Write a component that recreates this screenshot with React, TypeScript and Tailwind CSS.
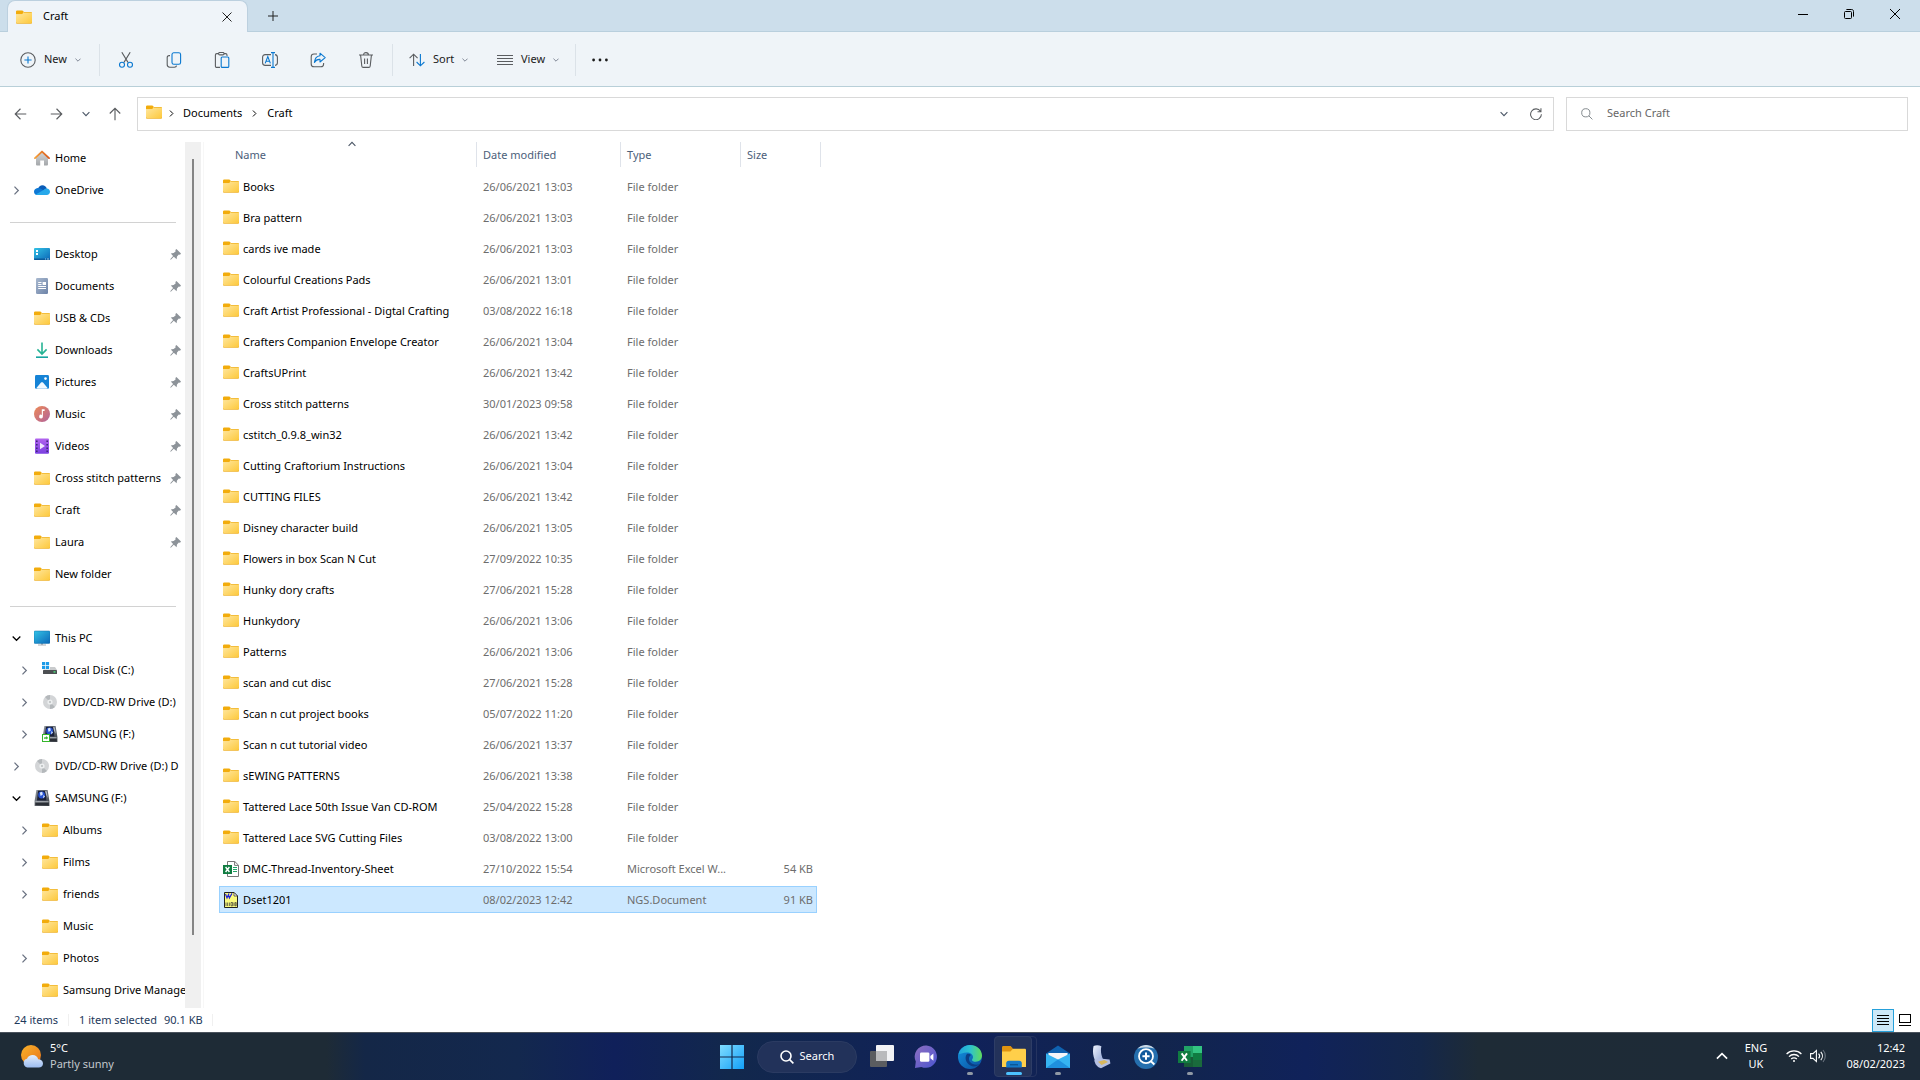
import type { ReactNode } from "react";

type NavItem = {
  label: string;
  icon: ReactNode;
  depth?: number;
  state?: "open" | "closed";
  pinned?: boolean;
};

type FileRow = {
  name: string;
  date: string;
  type: string;
  size?: string;
  icon: ReactNode;
  selected?: boolean;
};

const Gradients = () => (
  <svg className="absolute size-0" aria-hidden="true">
    <defs>
      <linearGradient id="folder" x1="0" y1="0" x2="1" y2="1">
        <stop offset="0" stopColor="#ffe8a2" />
        <stop offset="1" stopColor="#fdc83a" />
      </linearGradient>
      <linearGradient id="screen" x1="0" y1="0" x2="1" y2="1">
        <stop offset="0" stopColor="#33c3e6" />
        <stop offset="1" stopColor="#0b67b8" />
      </linearGradient>
      <linearGradient id="roof" x1="0" y1="0" x2="1" y2="0">
        <stop offset="0" stopColor="#f6a13a" />
        <stop offset="1" stopColor="#d8591c" />
      </linearGradient>
      <linearGradient id="wall" x1="0" y1="0" x2="0" y2="1">
        <stop offset="0" stopColor="#d4d6d8" />
        <stop offset="1" stopColor="#a4a7aa" />
      </linearGradient>
      <linearGradient id="doc" x1="0" y1="0" x2="1" y2="1">
        <stop offset="0" stopColor="#a9b9cf" />
        <stop offset="1" stopColor="#6d83a8" />
      </linearGradient>
      <linearGradient id="music" x1="0" y1="0" x2="1" y2="1">
        <stop offset="0" stopColor="#ee8a55" />
        <stop offset="1" stopColor="#b0629c" />
      </linearGradient>
      <linearGradient id="video" x1="0" y1="0" x2="0" y2="1">
        <stop offset="0" stopColor="#b264ee" />
        <stop offset="1" stopColor="#7a3fe0" />
      </linearGradient>
      <linearGradient id="drive" x1="0" y1="0" x2="1" y2="1">
        <stop offset="0" stopColor="#8d949c" />
        <stop offset="1" stopColor="#3a3f46" />
      </linearGradient>
      <linearGradient id="win" x1="0" y1="0" x2="1" y2="1">
        <stop offset="0" stopColor="#7fdcff" />
        <stop offset="1" stopColor="#12a0f8" />
      </linearGradient>
      <linearGradient id="chat" x1="0" y1="0" x2="1" y2="1">
        <stop offset="0" stopColor="#8f6fc0" />
        <stop offset="1" stopColor="#4a55d0" />
      </linearGradient>
      <linearGradient id="edgeTop" x1="0" y1="0" x2="1" y2="0">
        <stop offset="0" stopColor="#1fa2dd" />
        <stop offset="0.5" stopColor="#2dc2cf" />
        <stop offset="1" stopColor="#62dc5a" />
      </linearGradient>
      <linearGradient id="edgeLow" x1="0" y1="0" x2="1" y2="1">
        <stop offset="0" stopColor="#1393e0" />
        <stop offset="1" stopColor="#0a4f9e" />
      </linearGradient>
      <linearGradient id="lid" x1="0" y1="0" x2="1" y2="1">
        <stop offset="0" stopColor="#eef3fd" />
        <stop offset="1" stopColor="#8fa3d4" />
      </linearGradient>
      <linearGradient id="sun" x1="0" y1="0" x2="1" y2="1">
        <stop offset="0" stopColor="#f9b32a" />
        <stop offset="1" stopColor="#e8731a" />
      </linearGradient>
      <linearGradient id="cloud" x1="0" y1="0" x2="0" y2="1">
        <stop offset="0" stopColor="#e4eefc" />
        <stop offset="1" stopColor="#9dbdf0" />
      </linearGradient>
    </defs>
  </svg>
);

const FolderIcon = ({ className = "" }: { className?: string }) => (
  <svg className={`w-4 h-4 shrink-0 ${className}`} viewBox="0 0 16 16">
    <path d="M0 2.6C0 2 .5 1.4 1.1 1.4H6.4L8 3L6.5 5.4H0Z" fill="#f2ac0c" />
    <path d="M0 5.2H6L8 3H15C15.6 3 16 3.4 16 4V13.4C16 14 15.6 14.4 15 14.4H1C.4 14.4 0 14 0 13.4Z" fill="url(#folder)" />
    <path d="M8 3H15C15.5 3 15.9 3.3 16 3.7H7.4Z" fill="#f0b429" />
    <path d="M0 13.3C.2 13.8 .5 13.9 1 13.9H15C15.5 13.9 15.8 13.7 16 13.3C16 14.2 15.6 14.6 15 14.6H1C.4 14.6 0 14.2 0 13.3Z" fill="#e8a317" />
  </svg>
);

const HomeIcon = () => (
  <svg className="w-4 h-4 shrink-0" viewBox="0 0 16 16">
    <path d="M2 7.4L8 2L14 7.4V14.6C14 15.2 13.6 15.5 13 15.5H10V10.4H6.2V15.5H3C2.4 15.5 2 15.2 2 14.6Z" fill="url(#wall)" />
    <path d="M1 8.1L8 1.6L15 8.1" fill="none" stroke="url(#roof)" strokeWidth="1.9" strokeLinecap="round" strokeLinejoin="round" />
  </svg>
);

const OneDriveIcon = () => (
  <svg className="w-4 h-4 shrink-0" viewBox="0 0 16 16">
    <path d="M4 7C4.6 4.6 6.4 3.3 8.4 3.3C10.6 3.3 12.2 4.7 12.8 6.6L9 9.5Z" fill="#0a5cb8" />
    <path d="M3.6 6C5 5.8 6.3 6.2 7.4 7L11 9.3L3 13C1.3 12.8 0 11.4 0 9.7C0 7.7 1.5 6.2 3.6 6Z" fill="#0f78d4" />
    <path d="M12.8 6.5C14.6 6.6 16 8 16 9.8C16 11.7 14.6 13 12.8 13H3.4C2.7 13 2.1 12.8 1.6 12.4L9.6 7.9C10.5 7 11.6 6.4 12.8 6.5Z" fill="#27a8ea" />
  </svg>
);

const DesktopIcon = () => (
  <svg className="w-4 h-4 shrink-0" viewBox="0 0 16 16">
    <rect y="2" width="16" height="12" rx="1" fill="url(#screen)" />
    <path d="M2 4H4V6H2ZM2 7H4V9H2Z" fill="#fff" />
    <path d="M0 12.6H16V13C16 13.6 15.6 14 15 14H1C.4 14 0 13.6 0 13Z" fill="#0a5a9c" />
    <path d="M11 13H12M13 13H15" stroke="#bfe6fa" strokeWidth=".8" />
  </svg>
);

const DocumentsIcon = () => (
  <svg className="w-4 h-4 shrink-0" viewBox="0 0 16 16">
    <rect x="2" width="12" height="16" rx="1.2" fill="url(#doc)" />
    <path d="M4.2 4.5H7.5M4.2 6.5H7.5M4.2 8.5H12M4.2 10.5H12" stroke="#fff" strokeWidth="1" />
    <rect x="8.6" y="4" width="3.4" height="3" fill="#fff" />
  </svg>
);

const DownloadsIcon = () => (
  <svg className="w-4 h-4 shrink-0" viewBox="0 0 16 16" fill="none" stroke="#26b394" strokeWidth="1.6">
    <path d="M8 .5V11.6M3.4 7.4L8 12L12.6 7.4" />
    <path d="M2 15.2H14" stroke="#16a5a0" />
  </svg>
);

const PicturesIcon = () => (
  <svg className="w-4 h-4 shrink-0" viewBox="0 0 16 16">
    <rect x="1" y="1" width="14" height="14" rx="1.4" fill="#1583d6" />
    <path d="M2 14.6L7 8.6C7.6 8 8.4 8 9 8.6L14 14.6C13.8 14.9 2.3 14.9 2 14.6Z" fill="#f2f9ff" />
    <circle cx="11.5" cy="4.6" r="1.3" fill="#fff" />
  </svg>
);

const MusicIcon = () => (
  <svg className="w-4 h-4 shrink-0" viewBox="0 0 16 16">
    <circle cx="8" cy="8" r="8" fill="url(#music)" />
    <path d="M7.8 3.2H10.6V5H8.9V10.6A1.9 1.9 0 1 1 7.8 8.9Z" fill="#fff" />
  </svg>
);

const VideosIcon = () => (
  <svg className="w-4 h-4 shrink-0" viewBox="0 0 16 16">
    <rect x="1" y=".4" width="14" height="15.4" rx="1" fill="url(#video)" />
    <path d="M2 2.5H3.6V4H2ZM2 6H3.6V7.5H2ZM2 9.5H3.6V11H2ZM2 12.6H3.6V14H2ZM12.4 2.5H14V4H12.4ZM12.4 6H14V7.5H12.4ZM12.4 9.5H14V11H12.4ZM12.4 12.6H14V14H12.4Z" fill="#3d2a78" />
    <path d="M6 4.8L11 8L6 11.2Z" fill="#efe6fc" />
  </svg>
);

const PcIcon = () => (
  <svg className="w-4 h-4 shrink-0" viewBox="0 0 16 16">
    <path d="M7 13H9V14.6H12V15.6H4V14.6H7Z" fill="#a9b0b6" />
    <rect y="1" width="16" height="12.4" rx="1" fill="url(#screen)" stroke="#0f6ca8" strokeWidth=".5" />
  </svg>
);

const DiskIcon = () => (
  <svg className="w-4 h-4 shrink-0" viewBox="0 0 16 16">
    <path d="M0 0H3.2V3.2H0ZM3.9 0H7.1V3.2H3.9ZM0 3.9H3.2V7.1H0ZM3.9 3.9H7.1V7.1H3.9Z" fill="#1d9be8" />
    <path d="M8 5H13L15 8H1L2 7.6H8Z" fill="#c9cbcd" />
    <rect x="1" y="8" width="14" height="4" rx=".6" fill="#4c4f52" />
    <rect x="11.5" y="9.2" width="2" height="1.4" fill="#4be07a" />
  </svg>
);

const DiscIcon = () => (
  <svg className="w-4 h-4 shrink-0" viewBox="0 0 16 16">
    <circle cx="8" cy="8" r="7" fill="#d3d5d7" />
    <path d="M8 8L3 3A7 7 0 0 1 8 1ZM8 8L13 13A7 7 0 0 1 8 15Z" fill="#b4b8bb" />
    <circle cx="8" cy="8" r="2.6" fill="#eceeef" />
    <circle cx="8" cy="8" r="1" fill="#b9bcbe" />
  </svg>
);

const SamsungIcon = ({ linked = false }: { linked?: boolean }) => (
  <svg className="w-4 h-4 shrink-0" viewBox="0 0 16 16">
    <path d="M2.4 0H13.6L15.4 11V16H.6V11Z" fill="url(#drive)" />
    <path d="M4 .8H11.4L12.4 10.4H3Z" fill="#1a2038" />
    <circle cx="7.6" cy="5" r="3.4" fill="#2450d0" />
    <path d="M5.8 2.6L8.2 1.8L8.8 4.6L6.6 6ZM9.4 5L11 6.4L9.2 8.6Z" fill="#d8e7ff" />
    <path d="M11 1L12.8 1.4L13.8 8L12.2 5Z" fill="#b6bdc6" />
    <rect x="1.4" y="12.4" width="13.2" height="2.8" fill="#2b2f36" />
    <path d="M1.4 11.8H14.6" stroke="#c3c8ce" strokeWidth=".9" />
    {linked && (
      <>
        <rect x=".5" y="8.5" width="7" height="7" fill="#fff" stroke="#35b52c" />
        <path d="M2.2 13V11.2H4.2V10L6.2 12L4.2 13.6V12.6Z" fill="#35b52c" />
      </>
    )}
  </svg>
);

const ExcelFileIcon = () => (
  <svg className="w-4 h-4 shrink-0" viewBox="0 0 16 16">
    <path d="M4.5 .5H11.8L15.5 4.2V15.5H4.5Z" fill="#fff" stroke="#777" />
    <path d="M11.6 .6V4.4H15.4" fill="none" stroke="#777" />
    <path d="M10 6.5H14M10 8.5H14M10 10.5H14" stroke="#21a366" />
    <rect y="4" width="9" height="9" fill="#107c41" />
    <path d="M2.6 6L6.4 11M6.4 6L2.6 11" stroke="#fff" strokeWidth="1.4" />
  </svg>
);

const NgsFileIcon = () => (
  <svg className="w-4 h-4 shrink-0" viewBox="0 0 16 16">
    <path d="M1.5 .5H11L14.5 4V15.5H1.5Z" fill="#fbfb7e" stroke="#222" />
    <path d="M11 .5V4H14.5Z" fill="#fff" stroke="#222" strokeWidth=".7" />
    <path d="M2.5 2L4 6L6 1.6M5.4 2.6L6.4 6L9 1.4" fill="none" stroke="#2020d8" strokeWidth="1.2" />
    <path d="M3 10.5V14M4.6 10.5V14M6.4 10.5V14M8 10.5H9.6V13.8H8ZM11 10.5V14M12.2 10.5H13.2V13.8H12.2Z" fill="none" stroke="#333" strokeWidth=".7" />
  </svg>
);

const PinIcon = () => (
  <svg className="w-[11px] h-[11px] shrink-0" viewBox="0 0 11 11">
    <path d="M6.4 0L11 4.4L10 5.8L8.8 5.6L7 7.6L6.6 10.2L3.8 7.8L.8 10.8L.2 10.2L3.1 7L.8 4.6L3.6 4L5.6 2.4L5.4 1Z" fill="#8d9399" />
  </svg>
);

const Chevron = ({ d = "down", className = "size-2 text-gray-500" }: { d?: "down" | "up" | "right"; className?: string }) => (
  <svg className={`${className} shrink-0`} viewBox="0 0 8 8" fill="none" stroke="currentColor" strokeWidth="1.1">
    <path d={{ down: "M.6 2.2L4 5.6L7.4 2.2", up: "M.6 5.8L4 2.4L7.4 5.8", right: "M2.2 .6L5.6 4L2.2 7.4" }[d]} />
  </svg>
);

const Stroke = ({ children, className = "size-4" }: { children: ReactNode; className?: string }) => (
  <svg className={`${className} shrink-0`} viewBox="0 0 16 16" fill="none" stroke="#5a5d60" strokeWidth="1.1">
    {children}
  </svg>
);

const BLUE = "#0a78d0";

const TOOLS = [
  {
    label: "Cut",
    icon: (
      <>
        <path d="M3.8 .2L10 10.4M12.2 .2L6 10.4" />
        <circle cx="4" cy="12.8" r="2.5" stroke={BLUE} />
        <circle cx="12" cy="12.8" r="2.5" stroke={BLUE} />
      </>
    ),
  },
  {
    label: "Copy",
    icon: (
      <>
        <path d="M4 3.6H3.2C2 3.6 1.2 4.4 1.2 5.6V12.6C1.2 14.2 2.2 15.2 3.8 15.2H8.4C9.6 15.2 10.4 14.6 10.6 13.6" />
        <rect x="6" y=".8" width="8.6" height="11.4" rx="1.8" stroke={BLUE} />
      </>
    ),
  },
  {
    label: "Paste",
    icon: (
      <>
        <path d="M6 15.4H2.8C1.9 15.4 1.4 14.9 1.4 14V3C1.4 2.1 1.9 1.6 2.8 1.6H4.6M10 1.6H11.6C12.5 1.6 13 2.1 13 3V4" />
        <rect x="4.6" y=".5" width="5.4" height="2.4" rx="1.1" />
        <rect x="7.2" y="5" width="7.6" height="10.4" rx="1" stroke={BLUE} />
      </>
    ),
  },
  {
    label: "Rename",
    icon: (
      <>
        <path d="M9 2.6H3.2C1.6 2.6 .6 3.6 .6 5.2V10.8C.6 12.4 1.6 13.4 3.2 13.4H9M13 2.6C14.6 2.8 15.4 3.8 15.4 5.2V10.8C15.4 12.2 14.6 13.2 13 13.4" />
        <path d="M3.2 11.4L5.8 4.6L8.4 11.4M4 9.2H7.6M9 .6H13M11 .6V15.4M9 15.4H13" stroke={BLUE} />
      </>
    ),
  },
  {
    label: "Share",
    icon: (
      <>
        <path d="M7 2H4C2.2 2 1.2 3 1.2 4.8V12C1.2 13.8 2.2 14.8 4 14.8H10.8C12.6 14.8 13.6 13.8 13.6 12V11" />
        <path d="M10 1.2L15.2 5.6L10 10V7.4C7.6 7.2 5.8 8 4.4 10.4C4.8 6.6 6.6 4.2 10 3.8Z" stroke={BLUE} strokeLinejoin="round" />
      </>
    ),
  },
  {
    label: "Delete",
    icon: <path d="M1 3H15M5.6 2.8C5.6 1.4 6.6 .6 8 .6C9.4 .6 10.4 1.4 10.4 2.8M2.6 3.2L3.8 14C3.9 14.9 4.4 15.4 5.2 15.4H10.8C11.6 15.4 12.1 14.9 12.2 14L13.4 3.2M6.6 6.4V12M9.4 6.4V12" />,
  },
];

const f = <FolderIcon />;

const HOME: NavItem[] = [
  { label: "Home", icon: <HomeIcon /> },
  { label: "OneDrive", icon: <OneDriveIcon />, state: "closed" },
];

const PINNED: NavItem[] = [
  { label: "Desktop", icon: <DesktopIcon />, pinned: true },
  { label: "Documents", icon: <DocumentsIcon />, pinned: true },
  { label: "USB & CDs", icon: f, pinned: true },
  { label: "Downloads", icon: <DownloadsIcon />, pinned: true },
  { label: "Pictures", icon: <PicturesIcon />, pinned: true },
  { label: "Music", icon: <MusicIcon />, pinned: true },
  { label: "Videos", icon: <VideosIcon />, pinned: true },
  { label: "Cross stitch patterns", icon: f, pinned: true },
  { label: "Craft", icon: f, pinned: true },
  { label: "Laura", icon: f, pinned: true },
  { label: "New folder", icon: f },
];

const DRIVES: NavItem[] = [
  { label: "This PC", icon: <PcIcon />, state: "open" },
  { label: "Local Disk (C:)", icon: <DiskIcon />, state: "closed", depth: 1 },
  { label: "DVD/CD-RW Drive (D:)", icon: <DiscIcon />, state: "closed", depth: 1 },
  { label: "SAMSUNG (F:)", icon: <SamsungIcon linked />, state: "closed", depth: 1 },
  { label: "DVD/CD-RW Drive (D:) D", icon: <DiscIcon />, state: "closed" },
  { label: "SAMSUNG (F:)", icon: <SamsungIcon />, state: "open" },
  { label: "Albums", icon: f, state: "closed", depth: 1 },
  { label: "Films", icon: f, state: "closed", depth: 1 },
  { label: "friends", icon: f, state: "closed", depth: 1 },
  { label: "Music", icon: f, depth: 1 },
  { label: "Photos", icon: f, state: "closed", depth: 1 },
  { label: "Samsung Drive Manage", icon: f, depth: 1 },
];

const folder = (name: string, date: string): FileRow => ({
  name,
  date,
  type: "File folder",
  icon: <FolderIcon className="mb-[3px]" />,
});

const FILES: FileRow[] = [
  folder("Books", "26/06/2021 13:03"),
  folder("Bra pattern", "26/06/2021 13:03"),
  folder("cards ive made", "26/06/2021 13:03"),
  folder("Colourful Creations Pads", "26/06/2021 13:01"),
  folder("Craft Artist Professional - Digtal Crafting", "03/08/2022 16:18"),
  folder("Crafters Companion Envelope Creator", "26/06/2021 13:04"),
  folder("CraftsUPrint", "26/06/2021 13:42"),
  folder("Cross stitch patterns", "30/01/2023 09:58"),
  folder("cstitch_0.9.8_win32", "26/06/2021 13:42"),
  folder("Cutting Craftorium Instructions", "26/06/2021 13:04"),
  folder("CUTTING FILES", "26/06/2021 13:42"),
  folder("Disney character build", "26/06/2021 13:05"),
  folder("Flowers in box Scan N Cut", "27/09/2022 10:35"),
  folder("Hunky dory crafts", "27/06/2021 15:28"),
  folder("Hunkydory", "26/06/2021 13:06"),
  folder("Patterns", "26/06/2021 13:06"),
  folder("scan and cut disc", "27/06/2021 15:28"),
  folder("Scan n cut project books", "05/07/2022 11:20"),
  folder("Scan n cut tutorial video", "26/06/2021 13:37"),
  folder("sEWING PATTERNS", "26/06/2021 13:38"),
  folder("Tattered Lace 50th Issue Van CD-ROM", "25/04/2022 15:28"),
  folder("Tattered Lace SVG Cutting Files", "03/08/2022 13:00"),
  { name: "DMC-Thread-Inventory-Sheet", date: "27/10/2022 15:54", type: "Microsoft Excel W...", size: "54 KB", icon: <ExcelFileIcon /> },
  { name: "Dset1201", date: "08/02/2023 12:42", type: "NGS.Document", size: "91 KB", icon: <NgsFileIcon />, selected: true },
];

const TitleBar = () => (
  <header className="flex justify-between h-8 bg-[#ccdeeb] border-b border-[#b9cfdd] pl-[7px] pr-0.5">
    <div className="flex items-start">
      <div className="flex items-center w-[241px] h-8 bg-[#eff4f9] rounded-t-lg border border-b-0 border-[#bcd0df] pl-2">
        <FolderIcon />
        <span className="ml-[11px] flex-1 text-black">Craft</span>
        <button aria-label="Close tab" className="w-10 h-7 flex items-center justify-center">
          <svg className="size-2.5" viewBox="0 0 10 10" stroke="#222" fill="none"><path d="M.5 .5L9.5 9.5M9.5 .5L.5 9.5" /></svg>
        </button>
      </div>
      <button aria-label="New tab" className="w-[50px] h-8 flex items-center justify-center">
        <svg className="size-2.5" viewBox="0 0 10 10" stroke="#222" fill="none"><path d="M5 0V10M0 5H10" /></svg>
      </button>
    </div>
    <div className="flex h-7">
      <button aria-label="Minimize" className="w-[46px] flex items-center justify-center">
        <svg className="size-2.5" viewBox="0 0 10 10" stroke="#000"><path d="M0 5.5H10" /></svg>
      </button>
      <button aria-label="Restore" className="w-[46px] flex items-center justify-center">
        <svg className="size-2.5" viewBox="0 0 10 10" stroke="#000" fill="none">
          <rect x=".5" y="2.5" width="7" height="7" rx="1" />
          <path d="M2.4 .5H7.6C8.8 .5 9.5 1.2 9.5 2.4V7.6" />
        </svg>
      </button>
      <button aria-label="Close" className="w-[46px] flex items-center justify-center">
        <svg className="size-2.5" viewBox="0 0 10 10" stroke="#000" fill="none"><path d="M0 0L10 10M10 0L0 10" /></svg>
      </button>
    </div>
  </header>
);

const Separator = () => <div className="w-px h-8 bg-[#dbe2e8]" />;

const Toolbar = () => (
  <div role="toolbar" className="flex items-center h-[55px] bg-[#eff4f8] border-b border-[#b8cfd8] pt-px text-[#1b1b1b]">
    <button className="flex items-center w-[99px] h-9 pl-5 gap-2">
      <Stroke>
        <circle cx="8" cy="8" r="7.2" />
        <path d="M8 4.4V11.6M4.4 8H11.6" stroke={BLUE} />
      </Stroke>
      New
      <Chevron className="size-1.5 text-gray-500" />
    </button>
    <Separator />
    <div className="flex mx-0.5">
      {TOOLS.map((t) => (
        <button key={t.label} aria-label={t.label} className="flex items-center justify-center w-12 h-9">
          <Stroke>{t.icon}</Stroke>
        </button>
      ))}
    </div>
    <Separator />
    <button className="flex items-center w-[88px] h-9 pl-4 gap-2">
      <Stroke>
        <path d="M4.6 14V2.2M.6 6.2L4.6 2.2L8.6 6.2" />
        <path d="M11.4 2V13.8M7.6 10L11.4 13.8L15.4 10" stroke={BLUE} />
      </Stroke>
      Sort
      <Chevron className="size-1.5 text-gray-500" />
    </button>
    <button className="flex items-center w-[94px] h-9 pl-4 gap-2">
      <Stroke><path d="M0 3.5H16M0 6.5H16M0 9.5H16M0 12.5H16" /></Stroke>
      View
      <Chevron className="size-1.5 text-gray-500" />
    </button>
    <Separator />
    <button aria-label="See more" className="flex items-center justify-center w-12 h-9">
      <svg className="size-4" viewBox="0 0 16 16" fill="#1b1b1b"><circle cx="1.6" cy="8" r="1.4" /><circle cx="8" cy="8" r="1.4" /><circle cx="14.4" cy="8" r="1.4" /></svg>
    </button>
  </div>
);

const AddressBar = () => (
  <div className="flex items-center h-[55px] pl-1 pr-3 pb-0.5">
    <button aria-label="Back" className="w-[34px] flex justify-center">
      <Stroke className="size-3.5"><path d="M14 8H1.6M7.4 2L1.4 8L7.4 14" strokeWidth="1.3" /></Stroke>
    </button>
    <button aria-label="Forward" className="w-9 flex justify-center">
      <Stroke className="size-3.5"><path d="M2 8H14.4M8.6 2L14.6 8L8.6 14" strokeWidth="1.3" /></Stroke>
    </button>
    <button aria-label="Recent locations" className="w-6 flex justify-center"><Chevron className="size-2 text-gray-600" /></button>
    <button aria-label="Up" className="w-[34px] flex justify-center">
      <Stroke className="size-3.5"><path d="M8 15V1.6M2 7.4L8 1.4L14 7.4" strokeWidth="1.3" /></Stroke>
    </button>
    <nav aria-label="Address" className="flex flex-1 items-center h-[34px] ml-[5px] border border-[#d9d9d9] pl-2 text-black">
      <FolderIcon className="mb-[3px]" />
      <span className="w-[21px] pl-1.5"><Chevron d="right" className="size-[7px] text-black" /></span>
      <a href="#documents">Documents</a>
      <span className="w-[25px] flex justify-center"><Chevron d="right" className="size-[7px] text-black" /></span>
      <a href="#craft">Craft</a>
      <button aria-label="Previous locations" className="ml-auto w-[30px] flex justify-center"><Chevron className="size-2 text-gray-600" /></button>
      <button aria-label="Refresh" className="w-[34px] flex justify-center">
        <Stroke className="size-3"><path d="M14 4.4A7.2 7.2 0 1 0 15.2 8.4M14.6 .4V5H10" strokeWidth="1.4" /></Stroke>
      </button>
    </nav>
    <label className="flex items-center w-[342px] h-[34px] ml-3 pl-3.5 gap-3.5 border border-[#d9d9d9]">
      <svg className="size-3 shrink-0" viewBox="0 0 12 12" fill="none" stroke="#858b8f"><circle cx="4.8" cy="4.8" r="4.1" /><path d="M7.8 7.8L11.4 11.4" /></svg>
      <input type="search" aria-label="Search Craft" placeholder="Search Craft" className="flex-1 outline-none placeholder:text-[#666]" />
    </label>
  </div>
);

const NavList = ({ items }: { items: NavItem[] }) => (
  <ul>
    {items.map((item, i) => (
      <li key={i}>
        <a href="#item" className={`flex items-center h-8 text-black whitespace-nowrap ${item.depth ? "pl-5" : "pl-3"}`}>
          <span className="w-[22px] shrink-0">
            {item.state === "open" && <Chevron className="size-[9px] text-black" />}
            {item.state === "closed" && <Chevron d="right" className="size-[9px] text-gray-500" />}
          </span>
          {item.icon}
          <span className="ml-[5px] flex-1">{item.label}</span>
          {item.pinned && <span className="mr-1"><PinIcon /></span>}
        </a>
      </li>
    ))}
  </ul>
);

const NavDivider = () => (
  <div className="h-8 flex items-center pl-2.5 pr-[9px]">
    <div className="h-px w-full bg-[#d2d2d2]" />
  </div>
);

const Sidebar = () => (
  <aside className="flex w-[204px] shrink-0 border-r border-[#f7f7f7]">
    <div className="w-[185px] overflow-hidden">
      <NavList items={HOME} />
      <NavDivider />
      <NavList items={PINNED} />
      <NavDivider />
      <NavList items={DRIVES} />
    </div>
    <div className="flex justify-center w-4 bg-[#f0f0f0] pt-[17px] pb-[73px]">
      <div className="w-0.5 bg-[#858585]" />
    </div>
  </aside>
);

const HEADINGS = [
  { label: "Name", width: "w-[258px]", pad: "pl-4" },
  { label: "Date modified", width: "w-36", pad: "pl-1.5" },
  { label: "Type", width: "w-[120px]", pad: "pl-1.5" },
  { label: "Size", width: "w-20", pad: "pl-1.5" },
];

const FileTable = () => (
  <main className="flex-1 pl-[15px]">
    <table className="table-fixed w-[602px] text-left">
      <thead>
        <tr>
          {HEADINGS.map((h) => (
            <th key={h.label} className={`${h.width} h-[29px] p-0 align-top font-normal text-[#4c607a]`}>
              <div className={`relative flex items-center h-[25px] pt-px border-r border-[#dfe3ea] ${h.pad}`}>
                {h.label}
                {h.label === "Name" && <Chevron d="up" className="absolute left-[129px] -top-0.5 size-2 text-gray-600" />}
              </div>
            </th>
          ))}
        </tr>
      </thead>
      <tbody>
        {FILES.map((file) => {
          const cell = `flex items-center h-[27px] pt-px border-y ${file.selected ? "bg-[#cce8ff] border-[#99d1ff]" : "border-transparent"}`;
          return (
            <tr key={file.name} className="h-[31px] text-[#6d6d6d] whitespace-nowrap">
              <td className="p-0">
                <div className={`${cell} border-l pl-[3px] text-black`}>
                  {file.icon}
                  <span className="ml-1">{file.name}</span>
                </div>
              </td>
              <td className="p-0"><div className={`${cell} pl-1.5`}>{file.date}</div></td>
              <td className="p-0"><div className={`${cell} pl-1.5`}>{file.type}</div></td>
              <td className="p-0"><div className={`${cell} border-r justify-end pr-[3px] mr-1`}>{file.size}</div></td>
            </tr>
          );
        })}
      </tbody>
    </table>
  </main>
);

const StatusBar = () => (
  <footer className="flex items-center h-6 pl-3.5 pr-1 text-[#1e395b]">
    <span className="w-[54px]">24 items</span>
    <div className="w-px h-3 bg-[#f0f0f0]" />
    <span className="w-[95px] pl-2.5">1 item selected</span>
    <span className="w-[48px]">90.1 KB</span>
    <div className="w-px h-3 bg-[#f0f0f0]" />
    <div className="flex items-center ml-auto">
      <button aria-label="Details view" className="flex items-center justify-center w-[22px] h-[23px] bg-[#cce8f8] border border-[#26a0da]">
        <svg className="w-3 h-[11px]" viewBox="0 0 12 11" stroke="#000"><path d="M0 .5H12M0 3.5H12M0 6.5H12M0 9.5H12" /></svg>
      </button>
      <button aria-label="Large icons view" className="flex items-center justify-center w-[22px] h-[23px]">
        <svg className="w-3 h-3" viewBox="0 0 12 12" stroke="#000" fill="none"><rect x=".5" y=".5" width="11" height="8" /><path d="M0 11.5H12" /></svg>
      </button>
    </div>
  </footer>
);

const TASKS = [
  {
    label: "Task view",
    icon: (
      <>
        <rect x="6" y="0" width="18" height="16" rx="1" fill="#f2f3f5" />
        <rect x="0" y="6" width="17" height="16" rx="1" fill="#5b5d60" />
        <path d="M6 6H17V16H6Z" fill="#b9babc" />
      </>
    ),
  },
  {
    label: "Chat",
    icon: (
      <>
        <path d="M12.5 .5A11.2 11.2 0 1 1 7.4 22L1 23L1.8 16.6A11.2 11.2 0 0 1 12.5 .5Z" fill="url(#chat)" />
        <rect x="6" y="7.4" width="9.4" height="9.4" rx="1.4" fill="#fff" />
        <path d="M16.4 11L19.4 8.4V15.8L16.4 13.2Z" fill="#fff" />
      </>
    ),
  },
  {
    label: "Edge",
    running: true,
    icon: (
      <>
        <circle cx="12" cy="12" r="12" fill="url(#edgeLow)" />
        <path d="M.4 9.6C1.6 4 6.4 0 12 0C18.6 0 24 4.6 24 10.6C24 14.4 21.2 16.8 17.8 16.8C15.6 16.8 14 16 14 15C14 14.2 15 13.6 15 12C15 9.4 12.4 7.4 8.8 7.4C5 7.4 1.6 9 .4 9.6Z" fill="url(#edgeTop)" />
        <path d="M9 9C6.6 11.4 7 17.6 12.4 20.6C15.6 22.2 19.4 21.4 21.6 19C18.6 20.2 14.6 19.8 12.6 17.6C10.4 15.2 10.4 11.8 13 10C12 9 10.4 8.6 9 9Z" fill="#0b3f86" />
      </>
    ),
  },
  {
    label: "File Explorer",
    active: true,
    icon: (
      <>
        <path d="M0 2.4C0 1.6 .5 1 1.4 1H8.6L11 3.6V7H0Z" fill="#e09410" />
        <path d="M0 6.4H8.4L11 3.8H22.6C23.5 3.8 24 4.3 24 5.2V22H0Z" fill="#ffcf4a" />
        <path d="M4.2 22.6V18.4C4.2 16.8 5.2 15.8 6.8 15.8H17.2C18.8 15.8 19.8 16.8 19.8 18.4V22.6Z" fill="#1579c8" />
        <path d="M8 19H16V20.4H8Z" fill="#0a5797" />
      </>
    ),
  },
  {
    label: "Mail",
    running: true,
    icon: (
      <>
        <path d="M0 8.4L12 .6L24 8.4V14H0Z" fill="#0f62b0" />
        <path d="M2.4 8H21.6V12L12 18L2.4 12Z" fill="#f4f6f8" />
        <path d="M0 8.4L12 14.6L24 8.4V23H0Z" fill="#36b4f2" />
        <path d="M12 14.6L24 23H0Z" fill="#1f90de" />
      </>
    ),
  },
  {
    label: "Scan",
    icon: (
      <>
        <path d="M3.6 1C6 -.2 9 0 11.4 1.2C10.4 5.6 11 10.4 13.4 15L6 17.4C2.8 12 2.4 6 3.6 1Z" fill="url(#lid)" />
        <path d="M4.4 15L10 13.6L19.6 14.6L20.4 18.4L11 23.2C7.4 22.4 4.6 19 4.4 15Z" fill="#b4bfe2" />
        <path d="M8 16.8L14.4 15L18 17L11.6 20Z" fill="#d8b85e" />
      </>
    ),
  },
  {
    label: "Magnifier",
    icon: (
      <>
        <circle cx="12" cy="12" r="12" fill="#256fae" />
        <path d="M3.4 3.6A12 12 0 0 1 20.6 3.6C16 2 8 2 3.4 3.6Z" fill="#c9d6e2" />
        <circle cx="12" cy="11.2" r="7" fill="#125a9c" stroke="#fff" strokeWidth="1.8" />
        <path d="M12 7.6V14.8M8.4 11.2H15.6" stroke="#fff" strokeWidth="2" />
        <path d="M16.6 16L20.4 19.4" stroke="#fff" strokeWidth="2" />
      </>
    ),
  },
  {
    label: "Excel",
    running: true,
    icon: (
      <>
        <path d="M6 1H15V12H6Z" fill="#21a366" />
        <path d="M15 1H24V8H15Z" fill="#33c481" />
        <path d="M15 8H24V15H15Z" fill="#107c41" />
        <path d="M6 12H15V22H6Z" fill="#185c37" />
        <path d="M15 15H24V22H15Z" fill="#1a6a3c" />
        <rect y="6" width="12.6" height="12" fill="#107c41" />
        <path d="M3.6 8.4L9 15.8M9 8.4L3.6 15.8" stroke="#fff" strokeWidth="1.9" />
      </>
    ),
  },
];

const Taskbar = () => (
  <footer className="grid grid-cols-[1fr_auto_1fr] items-center h-12 border-t border-[#4a525c] text-white bg-[linear-gradient(90deg,#1e2b36_0%,#1e2b36_17%,#142747_19%,#13284e_27%,#10205a_32%,#12284c_38%,#10215a_50%,#12254c_60%,#10225a_68%,#14274a_74%,#1e2b36_77%,#1e2b38_100%)]">
    <button className="flex items-center justify-self-start pl-5 pb-0.5 gap-1.5 text-left leading-4">
      <svg className="size-6" viewBox="0 0 24 24">
        <circle cx="11" cy="11" r="10" fill="url(#sun)" />
        <path d="M7.4 23.4A4.4 4.4 0 0 1 7 14.8C8 12.2 10.2 11 12.6 11C15.6 11 17.6 12.8 18.2 15.2C21 15.2 23 17 23 19.4C23 21.8 21.2 23.4 18.8 23.4Z" fill="url(#cloud)" />
      </svg>
      <span>
        <span className="block">5°C</span>
        <span className="block text-[#c3c8cd]">Partly sunny</span>
      </span>
    </button>
    <div className="flex items-center h-full pl-0.5">
      <button aria-label="Start" className="w-11 flex justify-center">
        <svg className="size-6" viewBox="0 0 24 24">
          <path d="M0 0H11.4V11.4H0ZM12.6 0H24V11.4H12.6ZM0 12.6H11.4V24H0ZM12.6 12.6H24V24H12.6Z" fill="url(#win)" />
        </svg>
      </button>
      <button className="flex items-center justify-center gap-1.5 w-[100px] h-8 mx-[3px] rounded-full bg-[#22325a] border border-[#2b3b62]">
        <svg className="size-3.5" viewBox="0 0 14 14" fill="none" stroke="#fff" strokeWidth="1.6"><circle cx="6" cy="6" r="5" /><path d="M9.6 9.6L13.4 13.4" /></svg>
        Search
      </button>
      {TASKS.map((t) => (
        <button key={t.label} aria-label={t.label} className="relative flex items-center justify-center w-11 h-full">
          {t.active && (
            <>
              <span className="absolute inset-y-[3px] left-2.5 -right-px rounded border border-[#253460]" />
              <span className="absolute inset-y-[3px] left-0.5 right-1 rounded bg-[#23325a] border border-[#2e3d66]" />
            </>
          )}
          <svg className="relative size-6" viewBox="0 0 24 24">{t.icon}</svg>
          {t.running && <span className="absolute bottom-[5px] w-1.5 h-[3px] rounded-full bg-[#9099a5]" />}
          {t.active && <span className="absolute bottom-[5px] w-4 h-[3px] rounded-full bg-[#4cc2ff]" />}
        </button>
      ))}
    </div>
    <div className="flex items-center justify-self-end pr-[15px] pb-0.5 leading-4">
      <button aria-label="Show hidden icons"><Chevron d="up" className="size-3 text-white" /></button>
      <button className="w-6 ml-4 mr-[18px] flex justify-center text-center">ENG<br />UK</button>
      <svg className="size-4 mr-2" viewBox="0 0 16 16" fill="none" stroke="#fff" strokeWidth="1.3">
        <path d="M.6 6A10.4 10.4 0 0 1 15.4 6M3 8.6A7 7 0 0 1 13 8.6M5.2 11A3.9 3.9 0 0 1 10.8 11" />
        <circle cx="8" cy="13" r="1" fill="#fff" stroke="none" />
      </svg>
      <svg className="size-4" viewBox="0 0 16 16" fill="none" stroke="#fff" strokeWidth="1.1">
        <path d="M.6 5.6H3L6.4 2.4V13.6L3 10.4H.6Z" />
        <path d="M8.6 5.6A3.6 3.6 0 0 1 8.6 10.4M10.8 3.8A6.4 6.4 0 0 1 10.8 12.2" />
        <path d="M13 2A9 9 0 0 1 13 14" stroke="#6b7580" />
      </svg>
      <button className="w-[66px] ml-[13px] text-right">12:42<br />08/02/2023</button>
    </div>
  </footer>
);

export default function App() {
  return (
    <div className="flex flex-col min-h-screen bg-white text-[11px] font-['Noto_Sans','Open_Sans',sans-serif]">
      <Gradients />
      <TitleBar />
      <Toolbar />
      <AddressBar />
      <div className="flex flex-1">
        <Sidebar />
        <FileTable />
      </div>
      <StatusBar />
      <Taskbar />
    </div>
  );
}
